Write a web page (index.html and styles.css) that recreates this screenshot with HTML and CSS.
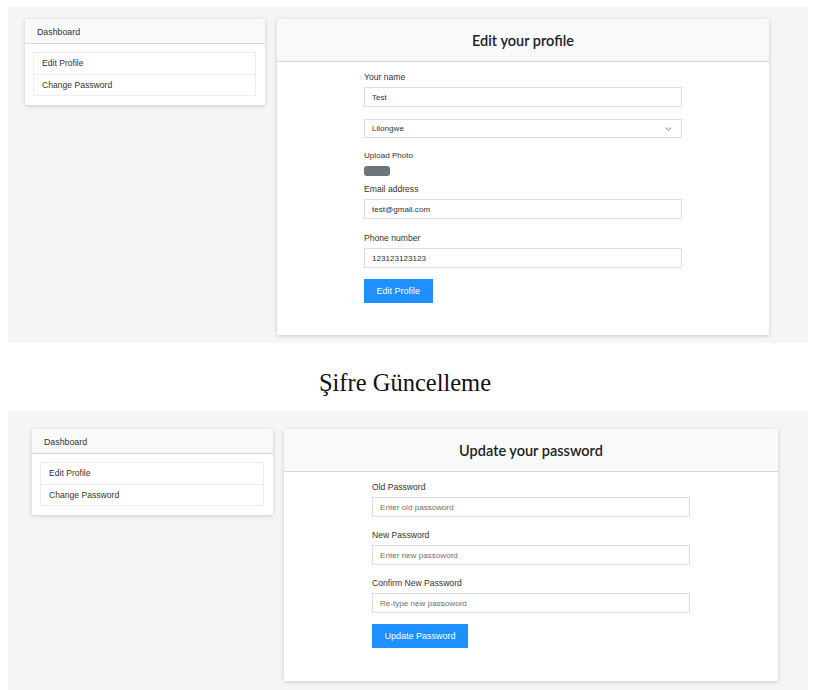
FILE: index.html
```html
<!DOCTYPE html>
<html lang="en">
<head>
<meta charset="utf-8">
<title>Profile</title>
<link rel="stylesheet" href="styles.css">
</head>
<body>
<section class="shot shot-top">
  <aside class="side-card">
    <div class="side-head">Dashboard</div>
    <ul class="list">
      <li class="list-item">Edit Profile</li>
      <li class="list-item">Change Password</li>
    </ul>
  </aside>
  <main class="main-card">
    <div class="main-head"><h3 class="main-title">Edit your profile</h3></div>
    <form class="form">
      <label class="label">Your name</label>
      <input class="field" type="text" value="Test">
      <div class="select-wrap">
        <select class="field select"><option>Lilongwe</option></select>
        <svg class="chev" width="7" height="4" viewBox="0 0 7 4"><path d="M0.8 0.6l2.7 2.6 2.7-2.6" fill="none" stroke="#666" stroke-width="0.9"/></svg>
      </div>
      <label class="label label-small">Upload Photo</label>
      <span class="upload"></span>
      <label class="label label-email">Email address</label>
      <input class="field" type="text" value="test@gmail.com">
      <label class="label label-gap label-phone">Phone number</label>
      <input class="field" type="text" value="123123123123">
      <button type="button" class="btn">Edit Profile</button>
    </form>
  </main>
</section>

<h2 class="caption">Şifre Güncelleme</h2>

<section class="shot shot-bottom">
  <aside class="side-card side-card-b">
    <div class="side-head">Dashboard</div>
    <ul class="list">
      <li class="list-item">Edit Profile</li>
      <li class="list-item">Change Password</li>
    </ul>
  </aside>
  <main class="main-card main-card-b">
    <div class="main-head"><h3 class="main-title">Update your password</h3></div>
    <form class="form">
      <label class="label">Old Password</label>
      <input class="field" type="password" placeholder="Enter old passoword">
      <label class="label label-gap">New Password</label>
      <input class="field" type="password" placeholder="Enter new passoword">
      <label class="label label-gap">Confirm New Password</label>
      <input class="field" type="password" placeholder="Re-type new passoword">
      <button type="button" class="btn">Update Password</button>
    </form>
  </main>
</section>
</body>
</html>
```

FILE: styles.css
```css
* { box-sizing: border-box; }
html, body { margin: 0; padding: 0; background: #fff; }
body { font-family: "Liberation Sans", Arial, sans-serif; color: #333; }

.shot {
  margin-left: 8px;
  width: 800px;
  background: #f5f5f5;
  display: flex;
  align-items: flex-start;
}
.shot-top { margin-top: 7px; height: 336px; padding: 12px 0 0 17px; gap: 12px; }
.shot-bottom { height: 290px; padding: 18px 0 0 24px; gap: 11px; }

.caption {
  font-family: "Liberation Serif", "Times New Roman", serif;
  font-weight: normal;
  font-size: 24.5px;
  line-height: 27px;
  color: #111;
  text-align: center;
  width: 810px;
  margin: 26px 0 15px;
}

.side-card {
  width: 240px;
  background: #fff;
  box-shadow: 0 1px 4px rgba(0,0,0,0.18);
  padding-bottom: 9px;
}
.side-card-b { width: 241px; }
.side-head {
  height: 25px;
  background: #f9f9f9;
  border-bottom: 1px solid #d8d8d8;
  padding: 0 12px;
  font-size: 8.8px;
  line-height: 26px;
  color: #2b3446;
}
.list {
  list-style: none;
  margin: 8px 9px 0 8px;
  padding: 0;
  border: 1px solid #eeeeee;
}
.list-item {
  height: 21px;
  line-height: 21px;
  padding-left: 8px;
  font-size: 8.6px;
  color: #333;
}
.list-item + .list-item { border-top: 1px solid #eeeeee; }

.main-card {
  width: 492px;
  height: 316px;
  background: #fff;
  box-shadow: 0 1px 4px rgba(0,0,0,0.18);
}
.main-card-b { width: 494px; height: 252px; }
.main-head {
  height: 43px;
  background: #f9f9f9;
  border-bottom: 1px solid #d6d6d6;
  display: flex;
  align-items: center;
  justify-content: center;
}
.main-title {
  margin: 0;
  font-family: Lato, "Open Sans", sans-serif;
  font-weight: 600;
  font-size: 14.5px;
  color: #222;
}

.form {
  width: 318px;
  margin-left: 87px;
  padding-top: 10px;
  display: flex;
  flex-direction: column;
  align-items: flex-start;
}
.main-card-b .form { margin-left: 88px; }

.label {
  font-size: 8.6px;
  line-height: 10px;
  color: #333;
  margin-bottom: 5px;
}
.label-small { font-size: 8.1px; margin-top: 13px; }
.label-email { margin-top: 8px; margin-bottom: 5px; }
.label-gap { margin-top: 13px; margin-bottom: 5px; }
.label-phone { margin-top: 14px; }

.field {
  display: block;
  width: 318px;
  height: 20px;
  border: 1px solid #dedede;
  background: #fff;
  padding: 0 7px;
  font-family: "Liberation Sans", Arial, sans-serif;
  font-size: 8.1px;
  color: #333;
  outline: none;
  border-radius: 0;
  margin: 0;
}
.field::placeholder { color: #707070; }

.select-wrap { position: relative; margin-top: 12px; }
.select { appearance: none; -webkit-appearance: none; height: 19px; }
.chev { position: absolute; right: 10px; top: 8px; }

.upload {
  display: block;
  width: 26px;
  height: 10px;
  border-radius: 3px;
  background: #6c757d;
}

.btn {
  margin-top: 11px;
  height: 24px;
  padding: 0 12.5px;
  border: none;
  border-radius: 0;
  background: #1e90ff;
  color: #fff;
  font-family: "Liberation Sans", Arial, sans-serif;
  font-size: 9px;
}
```
